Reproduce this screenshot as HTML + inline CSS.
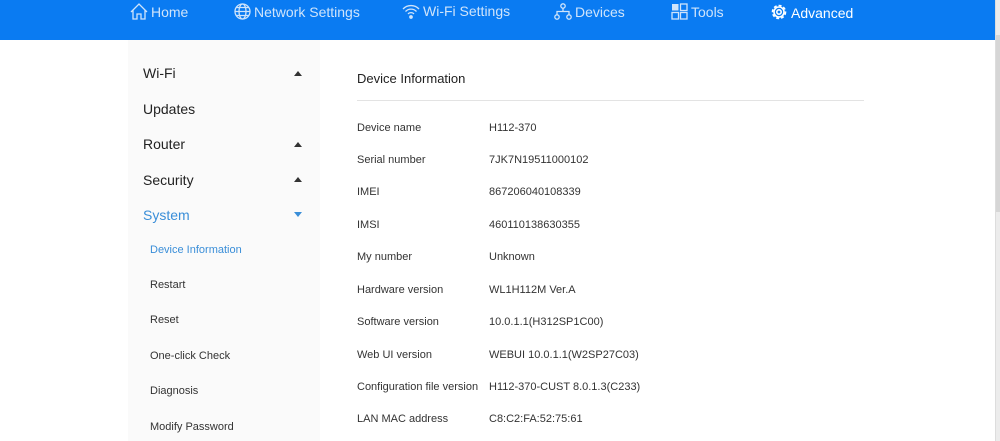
<!DOCTYPE html>
<html><head><style>
*{margin:0;padding:0;box-sizing:border-box}
body{width:1000px;height:441px;overflow:hidden;background:#fff;font-family:"Liberation Sans",Arial,sans-serif;position:relative}
.top{position:absolute;left:0;top:0;width:995px;height:40px;background:#0a7bf2}
.nav{position:absolute;top:3px;font-size:14px;color:#cfe4fb;white-space:nowrap}
.nav svg{vertical-align:-3px;margin-right:3px}
.sb{position:absolute;right:0;top:0;width:5px;height:441px;background:#ececec;border-left:1px solid #ddd}
.thumb{position:absolute;right:0;top:35px;width:4px;height:177px;background:#d6d6d6}
.side{position:absolute;left:128px;top:40px;width:192px;height:401px;background:#fafafa}
.m{position:absolute;left:143px;font-size:14px;color:#222}
.s{position:absolute;left:150px;font-size:11px;color:#333}
.up{position:absolute;left:294px;width:0;height:0;border-left:4px solid transparent;border-right:4px solid transparent;border-bottom:5px solid #333}
.dn{position:absolute;left:294px;width:0;height:0;border-left:4px solid transparent;border-right:4px solid transparent;border-top:5px solid #3a8ed8}
.l{position:absolute;left:357px;font-size:11px;color:#333}
.v{position:absolute;left:489px;font-size:11px;color:#333}
</style></head><body>
<div class="top"></div>
<div class="nav" style="left:130px"><svg width="18" height="17" viewBox="0 0 18 17" fill="none" stroke="#cfe4fb" stroke-width="1.3"><path d="M1 9L9 1l8 8M3 7v9h4v-5h4v5h4V7"/></svg>Home</div>
<div class="nav" style="left:234px"><svg width="17" height="17" viewBox="0 0 17 17" fill="none" stroke="#cfe4fb" stroke-width="1.3"><circle cx="8.5" cy="8.5" r="7.5"/><ellipse cx="8.5" cy="8.5" rx="3.5" ry="7.5"/><path d="M1 8.5h15M2.5 4.5h12M2.5 12.5h12"/></svg>Network Settings</div>
<div class="nav" style="left:402px"><svg width="18" height="16" viewBox="0 0 18 16" fill="none" stroke="#cfe4fb" stroke-width="1.3"><path d="M1 6a11 11 0 0 1 16 0M3.5 8.5a7.5 7.5 0 0 1 11 0M6 11a4 4 0 0 1 6 0"/><circle cx="9" cy="14" r="1.2" fill="#cfe4fb"/></svg>Wi-Fi Settings</div>
<div class="nav" style="left:554px"><svg width="18" height="17" viewBox="0 0 18 17" fill="none" stroke="#cfe4fb" stroke-width="1.3"><circle cx="9" cy="3" r="2.2"/><circle cx="3" cy="14" r="2.2"/><circle cx="15" cy="14" r="2.2"/><path d="M9 5.2v3.3M3 11.8V8.5h12v3.3"/></svg>Devices</div>
<div class="nav" style="left:671px"><svg width="17" height="17" viewBox="0 0 17 17"><rect x="1" y="1" width="6.5" height="6.5" fill="#cfe4fb"/><rect x="9.5" y="1" width="6.5" height="6.5" fill="none" stroke="#cfe4fb" stroke-width="1.3"/><rect x="1" y="9.5" width="6.5" height="6.5" fill="none" stroke="#cfe4fb" stroke-width="1.3"/><rect x="9.5" y="9.5" width="6.5" height="6.5" fill="none" stroke="#cfe4fb" stroke-width="1.3"/></svg>Tools</div>
<div class="nav" style="left:770px;color:#fff"><svg width="18" height="18" viewBox="0 0 18 18" fill="none" stroke="#fff" stroke-width="1.6"><circle cx="9" cy="9" r="6.5" stroke-dasharray="3 2"/><circle cx="9" cy="9" r="5"/><circle cx="9" cy="9" r="2.2"/></svg>Advanced</div>
<div class="sb"><div class="thumb"></div></div>
<div class="side"></div>
<div class="m" style="top:65px">Wi-Fi</div><div class="up" style="top:71px"></div>
<div class="m" style="top:101px">Updates</div>
<div class="m" style="top:136px">Router</div><div class="up" style="top:142px"></div>
<div class="m" style="top:172px">Security</div><div class="up" style="top:177px"></div>
<div class="m" style="top:207px;color:#3a8ed8">System</div><div class="dn" style="top:212px"></div>
<div class="s" style="top:244px;color:#3a8ed8">Device Information</div>
<div class="s" style="top:279px">Restart</div>
<div class="s" style="top:314px">Reset</div>
<div class="s" style="top:350px">One-click Check</div>
<div class="s" style="top:385px">Diagnosis</div>
<div class="s" style="top:421px">Modify Password</div>
<div style="position:absolute;left:357px;top:71px;font-size:13px;color:#222">Device Information</div>
<div style="position:absolute;left:357px;top:100px;width:507px;height:1px;background:#e3e3e3"></div>
<div class="l" style="top:122px">Device name</div><div class="v" style="top:122px">H112-370</div>
<div class="l" style="top:154px">Serial number</div><div class="v" style="top:154px">7JK7N19511000102</div>
<div class="l" style="top:186px">IMEI</div><div class="v" style="top:186px">867206040108339</div>
<div class="l" style="top:219px">IMSI</div><div class="v" style="top:219px">460110138630355</div>
<div class="l" style="top:251px">My number</div><div class="v" style="top:251px">Unknown</div>
<div class="l" style="top:284px">Hardware version</div><div class="v" style="top:284px">WL1H112M Ver.A</div>
<div class="l" style="top:316px">Software version</div><div class="v" style="top:316px">10.0.1.1(H312SP1C00)</div>
<div class="l" style="top:349px">Web UI version</div><div class="v" style="top:349px">WEBUI 10.0.1.1(W2SP27C03)</div>
<div class="l" style="top:381px">Configuration file version</div><div class="v" style="top:381px">H112-370-CUST 8.0.1.3(C233)</div>
<div class="l" style="top:413px">LAN MAC address</div><div class="v" style="top:413px">C8:C2:FA:52:75:61</div>
</body></html>
